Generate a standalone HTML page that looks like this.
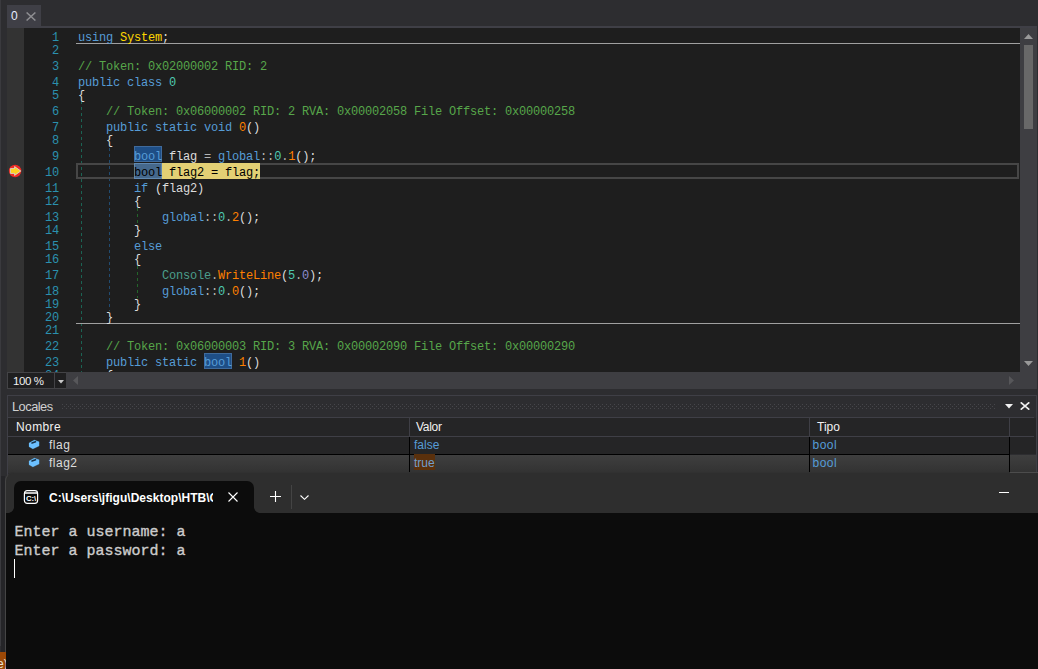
<!DOCTYPE html>
<html lang="es">
<head>
<meta charset="utf-8">
<title>dnSpy</title>
<style>
*{box-sizing:border-box;margin:0;padding:0}
html,body{width:1038px;height:669px;overflow:hidden;background:#2d2d30}
body{position:relative;font-family:"Liberation Sans",sans-serif;font-size:12px;color:#f1f1f1}
.abs{position:absolute}
#leftstrip{left:0;top:0;width:1px;height:646px;background:#3a3a3e}
#tab{left:7px;top:5px;width:34px;height:21px;background:#3f3f46}
#tab .t{position:absolute;left:4px;top:4px;font-size:12px;line-height:14px;color:#e6ecff}
#tab svg{position:absolute;left:19px;top:7px}
#tabline{left:7px;top:26px;width:1030px;height:2px;background:#3f3f46}
#editor{left:7px;top:28px;width:1013px;height:344px;background:#1e1e1e;overflow:hidden;font-family:"Liberation Mono",monospace;font-size:12px;letter-spacing:-0.2px}
#margin{left:0;top:0;width:17px;height:344px;background:#333333}
.ln{position:absolute;left:16px;width:36px;text-align:right;height:16px;line-height:16px;color:#2b91af;white-space:pre}
.cl{position:absolute;height:16px;line-height:16px;white-space:pre;color:#dcdcdc}
.k{color:#569cd6}.c{color:#57a64a}.t{color:#4ec9b0}.m{color:#ff8000}.p{color:#dcdcdc}.o{color:#b4b4b4}.n{color:#ffd700}.st{color:#4b9e8b}.f{color:#8c8ccf}
.hl{position:absolute;width:28px;height:16px;background:#1e4e86;border:1px solid #3f6a9b}
.blk{color:#000}
.sep{position:absolute;left:69px;width:944px;height:1px;background:#a0a0a0}
.guide{position:absolute;width:1px}
#curline{left:69px;top:135px;width:943px;height:16px;border:2px solid #464646}
#vscroll{left:1020px;top:28px;width:17px;height:344px;background:#3e3e42}
#vthumb{left:1024px;top:45px;width:9px;height:84px;background:#686868}
#hrow{left:7px;top:372px;width:1030px;height:17px;background:#3e3e42}
#zoom{left:7px;top:372px;width:48px;height:17px;background:#1f1f20;border:1px solid #434346;color:#f1f1f1;font-size:11.5px;line-height:17px;padding-left:5px;letter-spacing:-0.4px}
#zoomdd{left:55px;top:372px;width:11px;height:17px;background:#1f1f20;border:1px solid #434346;border-left:none;border-right:none}
#locales{left:7px;top:395px;width:1030px;height:80px;border:1px solid #3f3f46;background:#2d2d30}
#loctitle{left:12px;top:399px;font-size:12.8px;line-height:15px;color:#d0d0d0;letter-spacing:-0.5px}
#grip{left:62px;top:404px;width:933px;height:6px}
#lhdr{left:8px;top:417px;width:1026px;height:20px;background:#252526;border-top:1px solid #3f3f46;border-bottom:1px solid #3f3f46}
.hcell{position:absolute;top:420px;font-size:12px;line-height:14px;color:#f1f1f1}
.vsep{position:absolute;width:1px}
#row1{left:8px;top:437px;width:1028px;height:17px;background:#252526}
#row2{left:8px;top:455px;width:1028px;height:18px;background:linear-gradient(#3f3f3f,#323232)}
.cell{position:absolute;font-size:12px;line-height:14px}
#term{left:5px;top:472px;width:1033px;height:197px;background:#2e2e2e;border-top-left-radius:9px;overflow:hidden;border-left:1px solid #454545;border-top:1px solid #313131}
#tcontent{left:0;top:40px;width:1032px;height:157px;background:#0c0c0c}
#ttab{left:8px;top:8px;width:240px;height:32px;background:#0c0c0c;border-radius:7px 7px 0 0}
#ttitle{left:43px;top:18px;width:164px;overflow:hidden;white-space:nowrap;font-size:12px;line-height:15px;font-weight:bold;color:#fff;letter-spacing:0.02px}
.tl{position:absolute;left:8.5px;font-family:"Liberation Mono",monospace;font-size:15px;line-height:19px;color:#cccccc;white-space:pre;-webkit-text-stroke:0.35px #cccccc}
#status{left:0;top:652px;width:6px;height:17px;background:#9b4806;overflow:hidden;color:#e8e0d8;font-size:12px;line-height:25px;text-indent:-3px;white-space:nowrap}
</style>
</head>
<body>
<div id="leftstrip" class="abs"></div>

<!-- document tab -->
<div id="tab" class="abs"><span class="t">0</span>
<svg width="10" height="9" viewBox="0 0 10 9"><path d="M0.6 0.5 L9.4 8.5 M9.4 0.5 L0.6 8.5" stroke="#8e8e92" stroke-width="1.5" fill="none"/></svg>
</div>
<div id="tabline" class="abs"></div>

<!-- editor -->
<div id="editor" class="abs">
<div id="margin" class="abs"></div>
<div class="guide" style="left:74px;top:73px;height:271px;background:repeating-linear-gradient(#1b6353 0 3px,transparent 3px 6px)"></div>
<div class="guide" style="left:102px;top:120px;height:163px;background:repeating-linear-gradient(#214b70 0 3px,transparent 3px 6px)"></div>
<div class="guide" style="left:130px;top:180px;height:16px;background:repeating-linear-gradient(#23662a 0 3px,transparent 3px 6px)"></div>
<div class="guide" style="left:130px;top:238px;height:32px;background:repeating-linear-gradient(#23662a 0 3px,transparent 3px 6px)"></div>
<div class="sep" style="top:15px"></div>
<div class="sep" style="top:295px"></div>
<div id="curline" class="abs"></div>
<div class="hl" style="left:127px;top:118px"></div>
<div class="abs" style="left:127px;top:135px;width:126px;height:16px;background:#e3d074"></div>
<div class="abs" style="left:127px;top:135px;width:28px;height:16px;background:#45688c;border:1px solid #6088b0"></div>
<div class="hl" style="left:197px;top:325px;height:16px"></div>
<div class="ln" style="top:2px">1</div>
<div class="cl" style="top:2px;left:71px"><span class="k">using</span> <span class="n">System</span><span class="p">;</span></div>
<div class="ln" style="top:15px">2</div>
<div class="ln" style="top:31px">3</div>
<div class="cl" style="top:31px;left:71px"><span class="c">// Token: 0x02000002 RID: 2</span></div>
<div class="ln" style="top:47px">4</div>
<div class="cl" style="top:47px;left:71px"><span class="k">public</span> <span class="k">class</span> <span class="t">0</span></div>
<div class="ln" style="top:60px">5</div>
<div class="cl" style="top:60px;left:71px"><span class="p">{</span></div>
<div class="ln" style="top:76px">6</div>
<div class="cl" style="top:76px;left:99px"><span class="c">// Token: 0x06000002 RID: 2 RVA: 0x00002058 File Offset: 0x00000258</span></div>
<div class="ln" style="top:92px">7</div>
<div class="cl" style="top:92px;left:99px"><span class="k">public</span> <span class="k">static</span> <span class="k">void</span> <span class="m">0</span><span class="p">()</span></div>
<div class="ln" style="top:105px">8</div>
<div class="cl" style="top:105px;left:99px"><span class="p">{</span></div>
<div class="ln" style="top:121px">9</div>
<div class="cl" style="top:121px;left:127px"><span class="k">bool</span> <span class="p">flag</span> <span class="o">=</span> <span class="k">global</span><span class="o">::</span><span class="t">0</span><span class="o">.</span><span class="m">1</span><span class="p">();</span></div>
<div class="ln" style="top:137px">10</div>
<div class="cl" style="top:137px;left:127px"><span class="blk">bool flag2 = flag;</span></div>
<div class="ln" style="top:153px">11</div>
<div class="cl" style="top:153px;left:127px"><span class="k">if</span> <span class="p">(flag2)</span></div>
<div class="ln" style="top:166px">12</div>
<div class="cl" style="top:166px;left:127px"><span class="p">{</span></div>
<div class="ln" style="top:182px">13</div>
<div class="cl" style="top:182px;left:155px"><span class="k">global</span><span class="o">::</span><span class="t">0</span><span class="o">.</span><span class="m">2</span><span class="p">();</span></div>
<div class="ln" style="top:195px">14</div>
<div class="cl" style="top:195px;left:127px"><span class="p">}</span></div>
<div class="ln" style="top:211px">15</div>
<div class="cl" style="top:211px;left:127px"><span class="k">else</span></div>
<div class="ln" style="top:224px">16</div>
<div class="cl" style="top:224px;left:127px"><span class="p">{</span></div>
<div class="ln" style="top:240px">17</div>
<div class="cl" style="top:240px;left:155px"><span class="st">Console</span><span class="o">.</span><span class="m">WriteLine</span><span class="p">(</span><span class="t">5</span><span class="o">.</span><span class="f">0</span><span class="p">);</span></div>
<div class="ln" style="top:256px">18</div>
<div class="cl" style="top:256px;left:155px"><span class="k">global</span><span class="o">::</span><span class="t">0</span><span class="o">.</span><span class="m">0</span><span class="p">();</span></div>
<div class="ln" style="top:269px">19</div>
<div class="cl" style="top:269px;left:127px"><span class="p">}</span></div>
<div class="ln" style="top:282px">20</div>
<div class="cl" style="top:282px;left:99px"><span class="p">}</span></div>
<div class="ln" style="top:295px">21</div>
<div class="ln" style="top:311px">22</div>
<div class="cl" style="top:311px;left:99px"><span class="c">// Token: 0x06000003 RID: 3 RVA: 0x00002090 File Offset: 0x00000290</span></div>
<div class="ln" style="top:327px">23</div>
<div class="cl" style="top:327px;left:99px"><span class="k">public</span> <span class="k">static</span> <span class="k">bool</span> <span class="m">1</span><span class="p">()</span></div>
<div class="ln" style="top:340px">24</div>
<div class="cl" style="top:340px;left:99px"><span class="p">{</span></div>
</div>

<!-- breakpoint / current statement icon -->
<svg class="abs" style="left:8px;top:164px" width="14" height="14" viewBox="0 0 14 14">
<circle cx="7.1" cy="7" r="6.2" fill="#ee2a24"/>
<path d="M2.4 4.6 H6.6 V2.6 L12.8 7 L6.6 11.4 V9.4 H2.4 Z" fill="#ffd21e" stroke="#cfe4ea" stroke-width="0.8"/>
</svg>

<!-- vertical scrollbar -->
<div id="vscroll" class="abs"></div>
<div id="vthumb" class="abs"></div>
<svg class="abs" style="left:1024px;top:34px" width="9" height="5" viewBox="0 0 9 5"><path d="M0 5 L4.5 0 L9 5 Z" fill="#999999"/></svg>
<svg class="abs" style="left:1024px;top:361px" width="9" height="5" viewBox="0 0 9 5"><path d="M0 0 L4.5 5 L9 0 Z" fill="#999999"/></svg>

<!-- horizontal scrollbar row -->
<div id="hrow" class="abs"></div>
<div id="zoom" class="abs">100 %</div>
<div id="zoomdd" class="abs"><svg style="position:absolute;left:3px;top:7px" width="6" height="4" viewBox="0 0 6 4"><path d="M0 0 H6 L3 3.5 Z" fill="#c8c8c8"/></svg></div>
<svg class="abs" style="left:73px;top:376px" width="5" height="9" viewBox="0 0 5 9"><path d="M5 0 L0 4.5 L5 9 Z" fill="#57575a"/></svg>
<svg class="abs" style="left:1009px;top:376px" width="5" height="9" viewBox="0 0 5 9"><path d="M0 0 L5 4.5 L0 9 Z" fill="#57575a"/></svg>

<!-- Locales tool window -->
<div id="locales" class="abs"></div>
<div id="loctitle" class="abs">Locales</div>
<svg id="grip" class="abs" width="935" height="6">
<defs><pattern id="dots" width="4" height="4" patternUnits="userSpaceOnUse"><rect x="0" y="0" width="1" height="1" fill="#46464a"/><rect x="2" y="2" width="1" height="1" fill="#46464a"/></pattern></defs>
<rect width="935" height="5" fill="url(#dots)"/>
</svg>
<svg class="abs" style="left:1005px;top:404px" width="8" height="5" viewBox="0 0 8 5"><path d="M0 0 H8 L4 4.4 Z" fill="#f1f1f1"/></svg>
<svg class="abs" style="left:1020px;top:402px" width="10" height="8" viewBox="0 0 10 8"><path d="M0.7 0.3 L9.3 7.7 M9.3 0.3 L0.7 7.7" stroke="#f1f1f1" stroke-width="1.6" fill="none"/></svg>

<div id="lhdr" class="abs"></div>
<div class="hcell" style="left:16px;letter-spacing:0.4px">Nombre</div>
<div class="hcell" style="left:416px;letter-spacing:-0.3px">Valor</div>
<div class="hcell" style="left:817px">Tipo</div>
<div class="vsep" style="left:409px;top:418px;height:18px;background:#3f3f46"></div>
<div class="vsep" style="left:809px;top:418px;height:18px;background:#3f3f46"></div>
<div class="vsep" style="left:1009px;top:418px;height:18px;background:#3f3f46"></div>

<div class="abs" style="left:1034px;top:418px;width:2px;height:19px;background:#252526"></div>
<div id="row1" class="abs"></div>
<div class="abs" style="left:8px;top:454px;width:1002px;height:1px;background:#000"></div>
<div id="row2" class="abs"></div>
<div class="vsep" style="left:409px;top:437px;height:35px;background:#000"></div>
<div class="vsep" style="left:809px;top:437px;height:35px;background:#000"></div>
<div class="vsep" style="left:1009px;top:437px;height:35px;background:#000"></div>

<svg class="abs" style="left:28px;top:439px" width="12" height="11" viewBox="0 0 12 11"><path d="M1 4 L6.3 1 L11.1 2.8 L11.1 7 L4.9 9.9 L1 7.8 Z" fill="#6cc0ff" stroke="#6cc0ff" stroke-width="0.2" stroke-linejoin="round"/><path d="M4 4 L7.5 2.8" stroke="#16324a" stroke-width="1.6" stroke-linecap="round"/></svg>
<svg class="abs" style="left:28px;top:457px" width="12" height="11" viewBox="0 0 12 11"><path d="M1 4 L6.3 1 L11.1 2.8 L11.1 7 L4.9 9.9 L1 7.8 Z" fill="#6cc0ff" stroke="#6cc0ff" stroke-width="0.2" stroke-linejoin="round"/><path d="M4 4 L7.5 2.8" stroke="#16324a" stroke-width="1.6" stroke-linecap="round"/></svg>
<div class="cell" style="left:49px;top:438px;color:#dcdcdc;letter-spacing:0.5px">flag</div>
<div class="cell" style="left:49px;top:456px;color:#dcdcdc;letter-spacing:0.5px">flag2</div>
<div class="cell" style="left:414px;top:438px;color:#569cd6">false</div>
<div class="abs" style="left:414px;top:454px;width:21px;height:16px;background:#5a300c"></div>
<div class="cell" style="left:414px;top:456px;color:#6f9fd0">true</div>
<div class="cell" style="left:812.5px;top:438px;color:#569cd6;letter-spacing:0.5px">bool</div>
<div class="cell" style="left:812.5px;top:456px;color:#569cd6;letter-spacing:0.5px">bool</div>

<!-- terminal window -->
<div class="abs" style="left:1px;top:476px;width:4px;height:176px;background:#252528"></div>
<div id="term" class="abs">
<div id="ttab" class="abs"></div>
<div id="tcontent" class="abs"></div>
<div class="abs" style="left:2px;top:34px;width:6px;height:6px;background:radial-gradient(circle at 0 0,rgba(12,12,12,0) 5.5px,#0c0c0c 6.2px)"></div>
<div class="abs" style="left:248px;top:34px;width:6px;height:6px;background:radial-gradient(circle at 100% 0,rgba(12,12,12,0) 5.5px,#0c0c0c 6.2px)"></div>
<svg class="abs" style="left:17px;top:16px" width="16" height="16" viewBox="0 0 16 16"><rect x="1.4" y="1.6" width="13.2" height="12.8" rx="2.8" fill="none" stroke="#ffffff" stroke-width="1.2"/><path d="M1.8 4 H14.2" stroke="#fff" stroke-width="1.3"/><text x="2.9" y="12" font-family="Liberation Sans, sans-serif" font-size="7.2" font-weight="bold" fill="#fff" textLength="10.4" lengthAdjust="spacingAndGlyphs">C:\</text></svg>
<div id="ttitle" class="abs">C:\Users\jfigu\Desktop\HTB\C</div>
<svg class="abs" style="left:222px;top:19px" width="10" height="10" viewBox="0 0 10 10"><path d="M0.5 0.5 L9.5 9.5 M9.5 0.5 L0.5 9.5" stroke="#ffffff" stroke-width="1.1" fill="none"/></svg>
<svg class="abs" style="left:264px;top:18px" width="11" height="11" viewBox="0 0 11 11"><path d="M5.5 0 V11 M0 5.5 H11" stroke="#ffffff" stroke-width="1.1" fill="none"/></svg>
<div class="abs" style="left:285px;top:12px;width:1px;height:24px;background:#444444"></div>
<svg class="abs" style="left:294px;top:22px" width="9" height="5" viewBox="0 0 9 5"><path d="M0.5 0.5 L4.5 4.3 L8.5 0.5" stroke="#ffffff" stroke-width="1.1" fill="none"/></svg>
<div class="abs" style="left:993px;top:19px;width:10px;height:1px;background:#ffffff"></div>
<div class="tl" style="top:50px">Enter a username: a</div>
<div class="tl" style="top:69px">Enter a password: a</div>
<div class="abs" style="left:8px;top:86px;width:1px;height:19px;background:#ffffff"></div>
</div>
<div class="abs" style="left:1010px;top:472px;width:28px;height:1px;background:#4c4c4c"></div>
<div id="status" class="abs">e)</div>
</body>
</html>
